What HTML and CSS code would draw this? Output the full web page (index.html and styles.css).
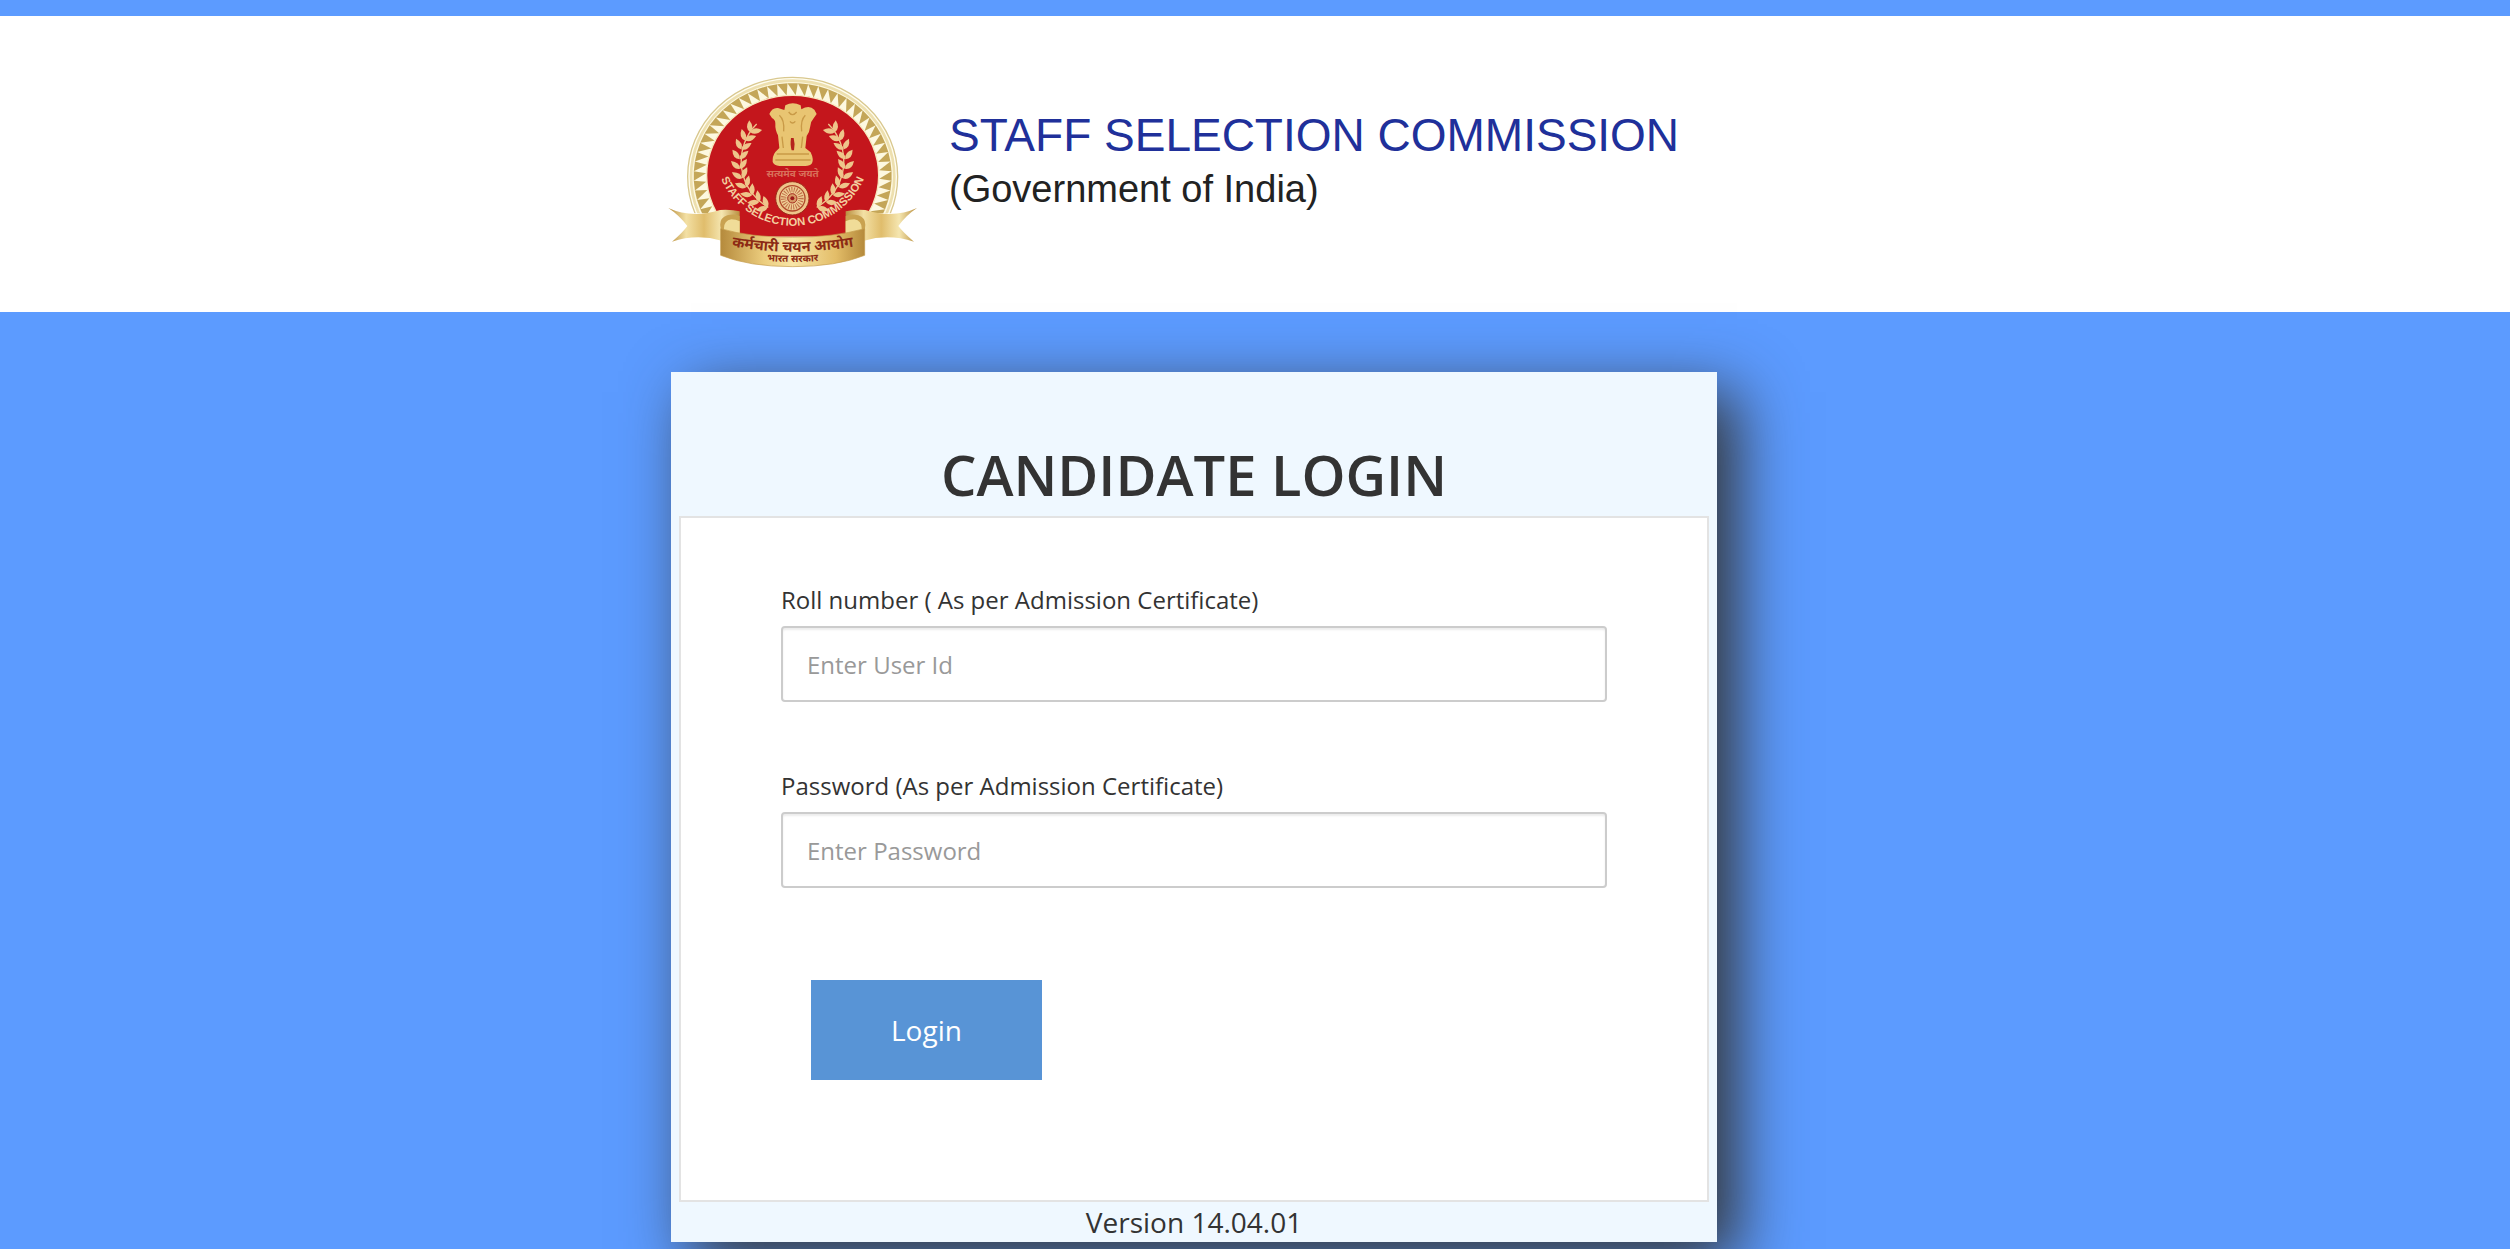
FILE: index.html
```html
<!DOCTYPE html>
<html lang="en">
<head>
    <meta charset="UTF-8">
    <meta name="viewport" content="width=device-width, initial-scale=1.0">
    <title>Candidate Login</title>
    <link rel="stylesheet" href="styles.css">
</head>
<body>
    <header class="header">
        <div class="container brand">
            <svg class="emblem" viewBox="93 60 750 600" role="img" aria-label="Staff Selection Commission emblem">
                <defs>
                    <linearGradient id="gold" x1="0" x2="1">
                        <stop offset="0" stop-color="#b98f3f"/>
                        <stop offset="0.25" stop-color="#f3e0a4"/>
                        <stop offset="0.5" stop-color="#e0bd6c"/>
                        <stop offset="0.75" stop-color="#f5e6b0"/>
                        <stop offset="1" stop-color="#b98f3f"/>
                    </linearGradient>
                    <linearGradient id="banner" x1="0" x2="1">
                        <stop offset="0" stop-color="#b58a3c"/>
                        <stop offset="0.3" stop-color="#eccd7e"/>
                        <stop offset="0.5" stop-color="#f8e6a8"/>
                        <stop offset="0.8" stop-color="#e3bd68"/>
                        <stop offset="1" stop-color="#b58a3c"/>
                    </linearGradient>
                    <path id="arc" d="M230 345A233 233 0 0 0 685 345"/>
                    <clipPath id="dome"><path d="M100 60H820V490H640V560H275V490H100Z"/></clipPath>
                </defs>

                <g clip-path="url(#dome)">
                    <ellipse cx="458" cy="380" rx="315" ry="298" fill="#fffdf0" stroke="#d9c88f" stroke-width="4"/>
                    <ellipse cx="458" cy="380" rx="305" ry="288" fill="#fdf8e0" stroke="#eddfae" stroke-width="8"/>
                    <g id="teeth" fill="#c4a658"></g>
                    <ellipse cx="458" cy="376" rx="258" ry="240" fill="#c4161c" stroke="#f6e8bd" stroke-width="4"/>
                </g>

                <!-- laurel -->
                <g id="laurel" fill="#eec58a"></g>

                <!-- lion capital -->
                <g fill="#e9c572">
                    <path d="M436 166Q458 154 482 166L484 178Q508 164 523 179L530 192L520 206Q512 214 511 228Q509 246 500 258L496 294L512 307Q522 328 516 340Q510 348 496 348H418Q402 347 398 336Q397 318 406 306L418 294L414 256Q405 240 406 220Q406 209 396 204L388 192Q396 172 414 174L433 180Z"/>
                    <path d="M453 264Q450 286 455 301H462Q466 282 461 264Z" fill="#b5231c"/>
                    <path d="M418 196Q434 210 431 244M496 196Q481 210 485 244M446 186Q457 202 470 186M450 214Q457 224 466 214M426 260L430 294M488 260L484 294M410 312H507M406 330H512" fill="none" stroke="#c99a47" stroke-width="4"/>
                </g>
                <text class="motto" x="458" y="382">सत्यमेव जयते</text>

                <!-- chakra -->
                <circle cx="457" cy="445" r="50" fill="#eec58a" stroke="#9c2a18" stroke-width="3"/>
                <circle cx="457" cy="445" r="38" fill="#efcf96" stroke="#b04a2c" stroke-width="4"/>
                <circle cx="457" cy="445" r="26" fill="none" stroke="#c07048" stroke-width="16" stroke-dasharray="3 4"/>
                <circle cx="457" cy="445" r="14" fill="#d79a66" stroke="#a3271c" stroke-width="3"/>
                <circle cx="457" cy="445" r="6" fill="#9c1a1a"/>

                <text class="ring-text"><textPath href="#arc" startOffset="50%">STAFF SELECTION COMMISSION</textPath></text>

                <!-- ribbon -->
                <path d="M85 474Q155 506 240 480Q275 478 299 484V546L245 572Q170 550 96 575Q128 548 142 528Q118 496 85 474Z" fill="url(#gold)"/>
                <path d="M831 474Q761 506 676 480Q641 478 617 484V546L672 572Q746 550 822 575Q790 548 775 528Q798 496 831 474Z" fill="url(#gold)"/>
                <path d="M244 542Q232 506 262 496Q284 490 299 498V560ZM673 542Q684 506 655 496Q633 490 617 498V560Z" fill="#c9a250"/>
                <path d="M252 540Q250 512 274 508Q288 508 299 514V556ZM665 540Q667 512 643 508Q628 508 617 514V556Z" fill="#f0dc98"/>
                <path d="M242 536Q330 562 458 562Q580 562 674 536V616Q590 650 458 650Q326 650 242 616Z" fill="url(#banner)" stroke="#c49b4c" stroke-width="2"/>
                <path id="line1" d="M246 584Q458 626 670 584" fill="none"/>
                <path id="line2" d="M330 628Q458 644 586 628" fill="none"/>
                <text class="ribbon-text"><textPath href="#line1" startOffset="50%">कर्मचारी चयन आयोग</textPath></text>
                <text class="ribbon-small"><textPath href="#line2" startOffset="50%">भारत सरकार</textPath></text>
            </svg>
            <div class="brand-text">
                <p class="brand-name">STAFF SELECTION COMMISSION</p>
                <p class="brand-sub">(Government of India)</p>
            </div>
        </div>
    </header>

    <main class="container">
        <div class="login-card">
            <h1 class="login-title">CANDIDATE LOGIN</h1>
            <form class="login-form" id="loginForm">
                <div class="form-group">
                    <label for="userId">Roll number ( As per Admission Certificate)</label>
                    <input type="text" id="userId" name="userId" placeholder="Enter User Id" required>
                </div>
                <div class="form-group">
                    <label for="password">Password (As per Admission Certificate)</label>
                    <input type="password" id="password" name="password" placeholder="Enter Password" required>
                </div>
                <button type="submit" class="login-btn">Login</button>
            </form>
            <p class="version">Version 14.04.01</p>
        </div>
    </main>

    <script>
        // gold teeth round the emblem
        let teeth = '';
        for (let a = 150; a <= 390; a += 6) {
            const p = (deg, rx, ry) => {
                const t = deg * Math.PI / 180;
                return (458 + rx * Math.cos(t)).toFixed(1) + ' ' + (378 + ry * Math.sin(t)).toFixed(1);
            };
            teeth += `<path d="M${p(a - 3, 297, 279)}L${p(a + 3, 297, 279)}L${p(a + 2, 260, 242)}Z"/>`;
        }
        document.getElementById('teeth').innerHTML = teeth;

        // laurel leaves, left branch and its mirror
        let branch = '<path d="M350 222A158 158 0 0 0 385 472" fill="none" stroke="#eec58a" stroke-width="4"/>';
        for (let i = 0; i < 10; i++) {
            const a = 118 + i * 11;
            const t = a * Math.PI / 180;
            const x = 457 + 158 * Math.cos(t);
            const y = 338 + 152 * Math.sin(t);
            [-42, 42].forEach(turn => {
                branch += `<path transform="translate(${x.toFixed(1)} ${y.toFixed(1)}) rotate(${a + 90 + turn})" d="M0 0Q14 -17 36 0Q14 15 0 0Z"/>`;
            });
        }
        document.getElementById('laurel').innerHTML =
            `<g>${branch}</g><g transform="translate(915 0) scale(-1 1)">${branch}</g>`;

        document.getElementById('loginForm').addEventListener('submit', function(event) {
            event.preventDefault();
        });
    </script>
</body>
</html>
```
FILE: styles.css
```css
* {
    box-sizing: border-box;
}

body {
    min-height: 100vh;
    margin: 0;
    border-top: 16px solid #5c9bff;
    background-color: #5c9bff;
    color: #333;
    font-family: "Open Sans", sans-serif;
    font-size: 24px;
}

p,
h1 {
    margin: 0;
}

.container {
    max-width: 1168px;
    margin: 0 auto;
}

.header {
    padding: 54px 0 42px;
    background-color: #fff;
}

.brand {
    display: flex;
    gap: 28px;
}

.emblem {
    width: 250px;
    height: 200px;
    flex-shrink: 0;
    overflow: visible;
}

.emblem text {
    font-family: "Noto Sans", "Noto Sans Devanagari", sans-serif;
    font-weight: bold;
    text-anchor: middle;
}

.emblem .ring-text {
    fill: #f3cfa0;
    font-family: "Liberation Sans", Arial, sans-serif;
    font-size: 34px;
}

.emblem .motto {
    fill: #d9705a;
    font-size: 30px;
}

.emblem .ribbon-text {
    fill: #8c2a14;
    font-size: 44px;
}

.emblem .ribbon-small {
    fill: #8c2a14;
    font-size: 30px;
}

.brand-text {
    padding-top: 38px;
    font-family: "Liberation Sans", Arial, sans-serif;
}

.brand-name {
    color: #20309a;
    font-size: 46px;
    line-height: 54px;
}

.brand-sub {
    color: #222;
    font-size: 38px;
    line-height: 54px;
}

.login-card {
    max-width: 1046px;
    margin: 60px 0 0;
    padding: 60px 8px 0;
    background-color: #eff8ff;
    box-shadow: 20px 20px 60px #333;
}

.login-title {
    font-size: 56px;
    font-weight: 600;
    line-height: 84px;
    text-align: center;
}

.login-form {
    padding: 64px 100px 120px;
    border: 2px solid #e3e3e3;
    background-color: #fff;
}

.form-group {
    margin-bottom: 66px;
}

label {
    display: block;
    margin-bottom: 8px;
    line-height: 36px;
}

input {
    display: block;
    width: 100%;
    height: 76px;
    padding: 12px 24px;
    border: 2px solid #ccc;
    border-radius: 4px;
    box-shadow: inset 0 2px 2px rgba(0, 0, 0, 0.08);
    color: #555;
    font-family: inherit;
    font-size: 24px;
}

input::placeholder {
    color: #999;
}

.login-btn {
    display: block;
    margin: 92px 30px 0;
    padding: 30px 80px;
    border: none;
    background-color: #5894d6;
    color: #fff;
    font-family: inherit;
    font-size: 28px;
    line-height: 40px;
    cursor: pointer;
}

.version {
    font-size: 28px;
    line-height: 40px;
    text-align: center;
}
```
